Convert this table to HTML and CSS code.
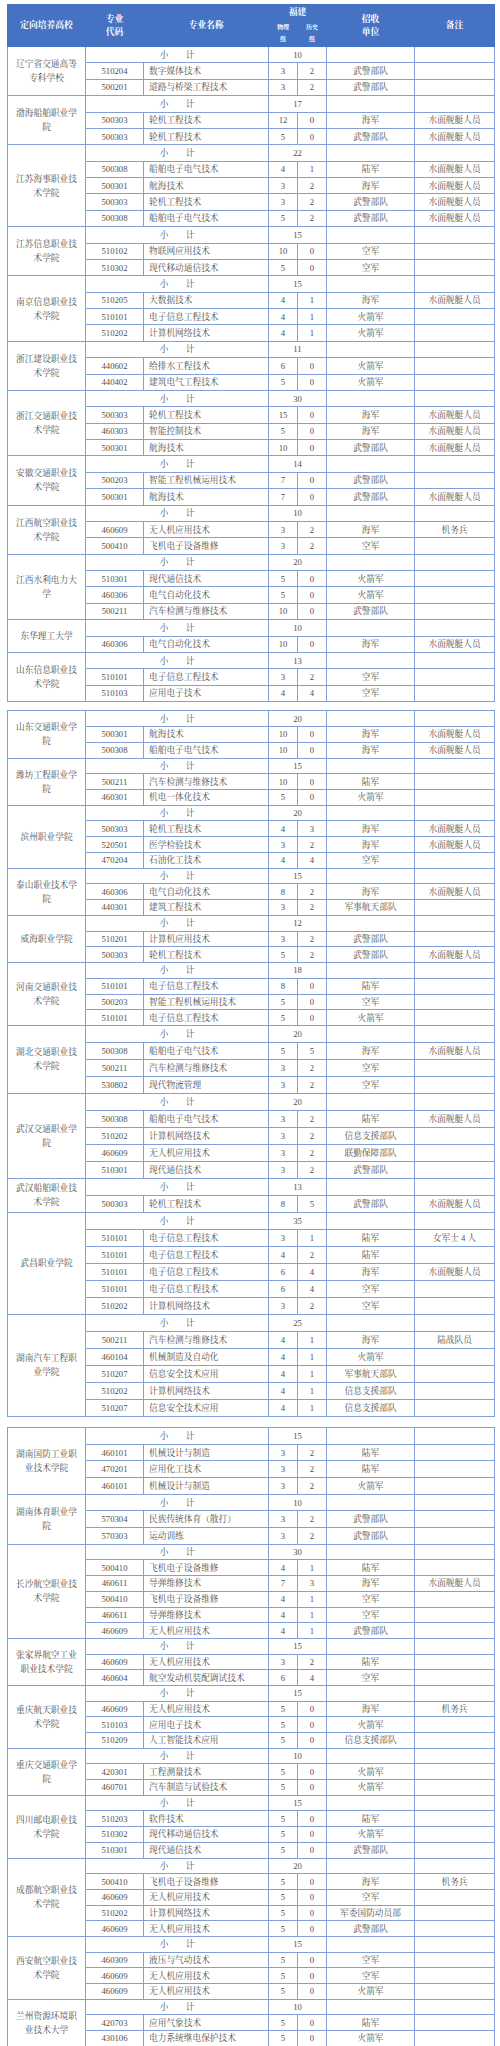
FILE: index.html
```html
<!DOCTYPE html>
<html lang="zh-CN">
<head>
<meta charset="utf-8">
<title>定向培养高校招生计划</title>
<link rel="stylesheet" href="styles.css">
</head>
<body>
<div class="page">

<table class="plan t1">
<colgroup><col class="c-school"><col class="c-code"><col class="c-name"><col class="c-num"><col class="c-num"><col class="c-unit"><col class="c-note"></colgroup>
<thead>
<tr class="h1"><th rowspan="2">定向培养高校</th><th rowspan="2">专业<br>代码</th><th rowspan="2">专业名称</th><th colspan="2">福建</th><th rowspan="2">招收<br>单位</th><th rowspan="2">备注</th></tr>
<tr class="h2"><th class="grp">物理<br>组</th><th class="grp">历史<br>组</th></tr>
</thead>
<tbody>
<tr><td class="sch" rowspan="3">辽宁省交通高等专科学校</td><td colspan="2">小　　计</td><td colspan="2">10</td><td></td><td></td></tr>
<tr><td>510204</td><td class="nm">数字媒体技术</td><td>3</td><td>2</td><td>武警部队</td><td></td></tr>
<tr><td>500201</td><td class="nm">道路与桥梁工程技术</td><td>3</td><td>2</td><td>武警部队</td><td></td></tr>
</tbody>
<tbody>
<tr><td class="sch" rowspan="3">渤海船舶职业学院</td><td colspan="2">小　　计</td><td colspan="2">17</td><td></td><td></td></tr>
<tr><td>500303</td><td class="nm">轮机工程技术</td><td>12</td><td>0</td><td>海军</td><td>水面舰艇人员</td></tr>
<tr><td>500303</td><td class="nm">轮机工程技术</td><td>5</td><td>0</td><td>武警部队</td><td>水面舰艇人员</td></tr>
</tbody>
<tbody>
<tr><td class="sch" rowspan="5">江苏海事职业技术学院</td><td colspan="2">小　　计</td><td colspan="2">22</td><td></td><td></td></tr>
<tr><td>500308</td><td class="nm">船舶电子电气技术</td><td>4</td><td>1</td><td>陆军</td><td>水面舰艇人员</td></tr>
<tr><td>500301</td><td class="nm">航海技术</td><td>3</td><td>2</td><td>海军</td><td>水面舰艇人员</td></tr>
<tr><td>500303</td><td class="nm">轮机工程技术</td><td>3</td><td>2</td><td>武警部队</td><td>水面舰艇人员</td></tr>
<tr><td>500308</td><td class="nm">船舶电子电气技术</td><td>5</td><td>2</td><td>武警部队</td><td>水面舰艇人员</td></tr>
</tbody>
<tbody>
<tr><td class="sch" rowspan="3">江苏信息职业技术学院</td><td colspan="2">小　　计</td><td colspan="2">15</td><td></td><td></td></tr>
<tr><td>510102</td><td class="nm">物联网应用技术</td><td>10</td><td>0</td><td>空军</td><td></td></tr>
<tr><td>510302</td><td class="nm">现代移动通信技术</td><td>5</td><td>0</td><td>空军</td><td></td></tr>
</tbody>
<tbody>
<tr><td class="sch" rowspan="4">南京信息职业技术学院</td><td colspan="2">小　　计</td><td colspan="2">15</td><td></td><td></td></tr>
<tr><td>510205</td><td class="nm">大数据技术</td><td>4</td><td>1</td><td>海军</td><td>水面舰艇人员</td></tr>
<tr><td>510101</td><td class="nm">电子信息工程技术</td><td>4</td><td>1</td><td>火箭军</td><td></td></tr>
<tr><td>510202</td><td class="nm">计算机网络技术</td><td>4</td><td>1</td><td>火箭军</td><td></td></tr>
</tbody>
<tbody>
<tr><td class="sch" rowspan="3">浙江建设职业技术学院</td><td colspan="2">小　　计</td><td colspan="2">11</td><td></td><td></td></tr>
<tr><td>440602</td><td class="nm">给排水工程技术</td><td>6</td><td>0</td><td>火箭军</td><td></td></tr>
<tr><td>440402</td><td class="nm">建筑电气工程技术</td><td>5</td><td>0</td><td>火箭军</td><td></td></tr>
</tbody>
<tbody>
<tr><td class="sch" rowspan="4">浙江交通职业技术学院</td><td colspan="2">小　　计</td><td colspan="2">30</td><td></td><td></td></tr>
<tr><td>500303</td><td class="nm">轮机工程技术</td><td>15</td><td>0</td><td>海军</td><td>水面舰艇人员</td></tr>
<tr><td>460303</td><td class="nm">智能控制技术</td><td>5</td><td>0</td><td>海军</td><td>水面舰艇人员</td></tr>
<tr><td>500301</td><td class="nm">航海技术</td><td>10</td><td>0</td><td>武警部队</td><td>水面舰艇人员</td></tr>
</tbody>
<tbody>
<tr><td class="sch" rowspan="3">安徽交通职业技术学院</td><td colspan="2">小　　计</td><td colspan="2">14</td><td></td><td></td></tr>
<tr><td>500203</td><td class="nm">智能工程机械运用技术</td><td>7</td><td>0</td><td>武警部队</td><td></td></tr>
<tr><td>500301</td><td class="nm">航海技术</td><td>7</td><td>0</td><td>武警部队</td><td>水面舰艇人员</td></tr>
</tbody>
<tbody>
<tr><td class="sch" rowspan="3">江西航空职业技术学院</td><td colspan="2">小　　计</td><td colspan="2">10</td><td></td><td></td></tr>
<tr><td>460609</td><td class="nm">无人机应用技术</td><td>3</td><td>2</td><td>海军</td><td>机务兵</td></tr>
<tr><td>500410</td><td class="nm">飞机电子设备维修</td><td>3</td><td>2</td><td>空军</td><td></td></tr>
</tbody>
<tbody>
<tr><td class="sch" rowspan="4">江西水利电力大学</td><td colspan="2">小　　计</td><td colspan="2">20</td><td></td><td></td></tr>
<tr><td>510301</td><td class="nm">现代通信技术</td><td>5</td><td>0</td><td>火箭军</td><td></td></tr>
<tr><td>460306</td><td class="nm">电气自动化技术</td><td>5</td><td>0</td><td>火箭军</td><td></td></tr>
<tr><td>500211</td><td class="nm">汽车检测与维修技术</td><td>10</td><td>0</td><td>武警部队</td><td></td></tr>
</tbody>
<tbody>
<tr><td class="sch" rowspan="2">东华理工大学</td><td colspan="2">小　　计</td><td colspan="2">10</td><td></td><td></td></tr>
<tr><td>460306</td><td class="nm">电气自动化技术</td><td>10</td><td>0</td><td>海军</td><td>水面舰艇人员</td></tr>
</tbody>
<tbody>
<tr><td class="sch" rowspan="3">山东信息职业技术学院</td><td colspan="2">小　　计</td><td colspan="2">13</td><td></td><td></td></tr>
<tr><td>510101</td><td class="nm">电子信息工程技术</td><td>3</td><td>2</td><td>空军</td><td></td></tr>
<tr><td>510103</td><td class="nm">应用电子技术</td><td>4</td><td>4</td><td>空军</td><td></td></tr>
</tbody>
</table>

<table class="plan t2">
<colgroup><col class="c-school"><col class="c-code"><col class="c-name"><col class="c-num"><col class="c-num"><col class="c-unit"><col class="c-note"></colgroup>
<tbody>
<tr><td class="sch" rowspan="3">山东交通职业学院</td><td colspan="2">小　　计</td><td colspan="2">20</td><td></td><td></td></tr>
<tr><td>500301</td><td class="nm">航海技术</td><td>10</td><td>0</td><td>海军</td><td>水面舰艇人员</td></tr>
<tr><td>500308</td><td class="nm">船舶电子电气技术</td><td>10</td><td>0</td><td>海军</td><td>水面舰艇人员</td></tr>
</tbody>
<tbody>
<tr><td class="sch" rowspan="3">潍坊工程职业学院</td><td colspan="2">小　　计</td><td colspan="2">15</td><td></td><td></td></tr>
<tr><td>500211</td><td class="nm">汽车检测与维修技术</td><td>10</td><td>0</td><td>陆军</td><td></td></tr>
<tr><td>460301</td><td class="nm">机电一体化技术</td><td>5</td><td>0</td><td>火箭军</td><td></td></tr>
</tbody>
<tbody>
<tr><td class="sch" rowspan="4">滨州职业学院</td><td colspan="2">小　　计</td><td colspan="2">20</td><td></td><td></td></tr>
<tr><td>500303</td><td class="nm">轮机工程技术</td><td>4</td><td>3</td><td>海军</td><td>水面舰艇人员</td></tr>
<tr><td>520501</td><td class="nm">医学检验技术</td><td>3</td><td>2</td><td>海军</td><td>水面舰艇人员</td></tr>
<tr><td>470204</td><td class="nm">石油化工技术</td><td>4</td><td>4</td><td>空军</td><td></td></tr>
</tbody>
<tbody>
<tr><td class="sch" rowspan="3">泰山职业技术学院</td><td colspan="2">小　　计</td><td colspan="2">15</td><td></td><td></td></tr>
<tr><td>460306</td><td class="nm">电气自动化技术</td><td>8</td><td>2</td><td>海军</td><td>水面舰艇人员</td></tr>
<tr><td>440301</td><td class="nm">建筑工程技术</td><td>3</td><td>2</td><td>军事航天部队</td><td></td></tr>
</tbody>
<tbody>
<tr><td class="sch" rowspan="3">威海职业学院</td><td colspan="2">小　　计</td><td colspan="2">12</td><td></td><td></td></tr>
<tr><td>510201</td><td class="nm">计算机应用技术</td><td>3</td><td>2</td><td>武警部队</td><td></td></tr>
<tr><td>500303</td><td class="nm">轮机工程技术</td><td>5</td><td>2</td><td>武警部队</td><td>水面舰艇人员</td></tr>
</tbody>
<tbody>
<tr><td class="sch" rowspan="4">河南交通职业技术学院</td><td colspan="2">小　　计</td><td colspan="2">18</td><td></td><td></td></tr>
<tr><td>510101</td><td class="nm">电子信息工程技术</td><td>8</td><td>0</td><td>陆军</td><td></td></tr>
<tr><td>500203</td><td class="nm">智能工程机械运用技术</td><td>5</td><td>0</td><td>空军</td><td></td></tr>
<tr><td>510101</td><td class="nm">电子信息工程技术</td><td>5</td><td>0</td><td>火箭军</td><td></td></tr>
</tbody>
<tbody class="tall">
<tr><td class="sch" rowspan="4">湖北交通职业技术学院</td><td colspan="2">小　　计</td><td colspan="2">20</td><td></td><td></td></tr>
<tr><td>500308</td><td class="nm">船舶电子电气技术</td><td>5</td><td>5</td><td>海军</td><td>水面舰艇人员</td></tr>
<tr><td>500211</td><td class="nm">汽车检测与维修技术</td><td>3</td><td>2</td><td>空军</td><td></td></tr>
<tr><td>530802</td><td class="nm">现代物流管理</td><td>3</td><td>2</td><td>空军</td><td></td></tr>
</tbody>
<tbody class="tall">
<tr><td class="sch" rowspan="5">武汉交通职业学院</td><td colspan="2">小　　计</td><td colspan="2">20</td><td></td><td></td></tr>
<tr><td>500308</td><td class="nm">船舶电子电气技术</td><td>3</td><td>2</td><td>陆军</td><td>水面舰艇人员</td></tr>
<tr><td>510202</td><td class="nm">计算机网络技术</td><td>3</td><td>2</td><td>信息支援部队</td><td></td></tr>
<tr><td>460609</td><td class="nm">无人机应用技术</td><td>3</td><td>2</td><td>联勤保障部队</td><td></td></tr>
<tr><td>510301</td><td class="nm">现代通信技术</td><td>3</td><td>2</td><td>武警部队</td><td></td></tr>
</tbody>
<tbody class="tall">
<tr><td class="sch" rowspan="2">武汉船舶职业技术学院</td><td colspan="2">小　　计</td><td colspan="2">13</td><td></td><td></td></tr>
<tr><td>500303</td><td class="nm">轮机工程技术</td><td>8</td><td>5</td><td>武警部队</td><td>水面舰艇人员</td></tr>
</tbody>
<tbody class="tall">
<tr><td class="sch" rowspan="6">武昌职业学院</td><td colspan="2">小　　计</td><td colspan="2">35</td><td></td><td></td></tr>
<tr><td>510101</td><td class="nm">电子信息工程技术</td><td>3</td><td>1</td><td>陆军</td><td>女军士 4 人</td></tr>
<tr><td>510101</td><td class="nm">电子信息工程技术</td><td>4</td><td>2</td><td>陆军</td><td></td></tr>
<tr><td>510101</td><td class="nm">电子信息工程技术</td><td>6</td><td>4</td><td>海军</td><td>水面舰艇人员</td></tr>
<tr><td>510101</td><td class="nm">电子信息工程技术</td><td>6</td><td>4</td><td>空军</td><td></td></tr>
<tr><td>510202</td><td class="nm">计算机网络技术</td><td>3</td><td>2</td><td>空军</td><td></td></tr>
</tbody>
<tbody class="tall">
<tr><td class="sch" rowspan="6">湖南汽车工程职业学院</td><td colspan="2">小　　计</td><td colspan="2">25</td><td></td><td></td></tr>
<tr><td>500211</td><td class="nm">汽车检测与维修技术</td><td>4</td><td>1</td><td>海军</td><td>陆战队员</td></tr>
<tr><td>460104</td><td class="nm">机械制造及自动化</td><td>4</td><td>1</td><td>火箭军</td><td></td></tr>
<tr><td>510207</td><td class="nm">信息安全技术应用</td><td>4</td><td>1</td><td>军事航天部队</td><td></td></tr>
<tr><td>510202</td><td class="nm">计算机网络技术</td><td>4</td><td>1</td><td>信息支援部队</td><td></td></tr>
<tr><td>510207</td><td class="nm">信息安全技术应用</td><td>4</td><td>1</td><td>信息支援部队</td><td></td></tr>
</tbody>
</table>

<table class="plan t3">
<colgroup><col class="c-school"><col class="c-code"><col class="c-name"><col class="c-num"><col class="c-num"><col class="c-unit"><col class="c-note"></colgroup>
<tbody class="tall">
<tr><td class="sch" rowspan="4">湖南国防工业职业技术学院</td><td colspan="2">小　　计</td><td colspan="2">15</td><td></td><td></td></tr>
<tr><td>460101</td><td class="nm">机械设计与制造</td><td>3</td><td>2</td><td>陆军</td><td></td></tr>
<tr><td>470201</td><td class="nm">应用化工技术</td><td>3</td><td>2</td><td>陆军</td><td></td></tr>
<tr><td>460101</td><td class="nm">机械设计与制造</td><td>3</td><td>2</td><td>火箭军</td><td></td></tr>
</tbody>
<tbody class="tall">
<tr><td class="sch" rowspan="3">湖南体育职业学院</td><td colspan="2">小　　计</td><td colspan="2">10</td><td></td><td></td></tr>
<tr><td>570304</td><td class="nm">民族传统体育（散打）</td><td>3</td><td>2</td><td>武警部队</td><td></td></tr>
<tr><td>570303</td><td class="nm">运动训练</td><td>3</td><td>2</td><td>武警部队</td><td></td></tr>
</tbody>
<tbody>
<tr><td class="sch" rowspan="6">长沙航空职业技术学院</td><td colspan="2">小　　计</td><td colspan="2">30</td><td></td><td></td></tr>
<tr><td>500410</td><td class="nm">飞机电子设备维修</td><td>4</td><td>1</td><td>陆军</td><td></td></tr>
<tr><td>460611</td><td class="nm">导弹维修技术</td><td>7</td><td>3</td><td>海军</td><td>水面舰艇人员</td></tr>
<tr><td>500410</td><td class="nm">飞机电子设备维修</td><td>4</td><td>1</td><td>空军</td><td></td></tr>
<tr><td>460611</td><td class="nm">导弹维修技术</td><td>4</td><td>1</td><td>空军</td><td></td></tr>
<tr><td>460609</td><td class="nm">无人机应用技术</td><td>4</td><td>1</td><td>武警部队</td><td></td></tr>
</tbody>
<tbody>
<tr><td class="sch" rowspan="3">张家界航空工业职业技术学院</td><td colspan="2">小　　计</td><td colspan="2">15</td><td></td><td></td></tr>
<tr><td>460609</td><td class="nm">无人机应用技术</td><td>3</td><td>2</td><td>陆军</td><td></td></tr>
<tr><td>460604</td><td class="nm">航空发动机装配调试技术</td><td>6</td><td>4</td><td>空军</td><td></td></tr>
</tbody>
<tbody>
<tr><td class="sch" rowspan="4">重庆航天职业技术学院</td><td colspan="2">小　　计</td><td colspan="2">15</td><td></td><td></td></tr>
<tr><td>460609</td><td class="nm">无人机应用技术</td><td>5</td><td>0</td><td>海军</td><td>机务兵</td></tr>
<tr><td>510103</td><td class="nm">应用电子技术</td><td>5</td><td>0</td><td>火箭军</td><td></td></tr>
<tr><td>510209</td><td class="nm">人工智能技术应用</td><td>5</td><td>0</td><td>信息支援部队</td><td></td></tr>
</tbody>
<tbody>
<tr><td class="sch" rowspan="3">重庆交通职业学院</td><td colspan="2">小　　计</td><td colspan="2">10</td><td></td><td></td></tr>
<tr><td>420301</td><td class="nm">工程测量技术</td><td>5</td><td>0</td><td>火箭军</td><td></td></tr>
<tr><td>460701</td><td class="nm">汽车制造与试验技术</td><td>5</td><td>0</td><td>火箭军</td><td></td></tr>
</tbody>
<tbody>
<tr><td class="sch" rowspan="4">四川邮电职业技术学院</td><td colspan="2">小　　计</td><td colspan="2">15</td><td></td><td></td></tr>
<tr><td>510203</td><td class="nm">软件技术</td><td>5</td><td>0</td><td>陆军</td><td></td></tr>
<tr><td>510302</td><td class="nm">现代移动通信技术</td><td>5</td><td>0</td><td>火箭军</td><td></td></tr>
<tr><td>510301</td><td class="nm">现代通信技术</td><td>5</td><td>0</td><td>武警部队</td><td></td></tr>
</tbody>
<tbody>
<tr><td class="sch" rowspan="5">成都航空职业技术学院</td><td colspan="2">小　　计</td><td colspan="2">20</td><td></td><td></td></tr>
<tr><td>500410</td><td class="nm">飞机电子设备维修</td><td>5</td><td>0</td><td>海军</td><td>机务兵</td></tr>
<tr><td>460609</td><td class="nm">无人机应用技术</td><td>5</td><td>0</td><td>空军</td><td></td></tr>
<tr><td>510202</td><td class="nm">计算机网络技术</td><td>5</td><td>0</td><td>军委国防动员部</td><td></td></tr>
<tr><td>460609</td><td class="nm">无人机应用技术</td><td>5</td><td>0</td><td>武警部队</td><td></td></tr>
</tbody>
<tbody>
<tr><td class="sch" rowspan="4">西安航空职业技术学院</td><td colspan="2">小　　计</td><td colspan="2">15</td><td></td><td></td></tr>
<tr><td>460309</td><td class="nm">液压与气动技术</td><td>5</td><td>0</td><td>空军</td><td></td></tr>
<tr><td>460609</td><td class="nm">无人机应用技术</td><td>5</td><td>0</td><td>空军</td><td></td></tr>
<tr><td>460609</td><td class="nm">无人机应用技术</td><td>5</td><td>0</td><td>火箭军</td><td></td></tr>
</tbody>
<tbody>
<tr><td class="sch" rowspan="3">兰州资源环境职业技术大学</td><td colspan="2">小　　计</td><td colspan="2">10</td><td></td><td></td></tr>
<tr><td>420703</td><td class="nm">应用气象技术</td><td>5</td><td>0</td><td>陆军</td><td></td></tr>
<tr><td>430106</td><td class="nm">电力系统继电保护技术</td><td>5</td><td>0</td><td>火箭军</td><td></td></tr>
</tbody>
</table>

</div>
</body>
</html>
```

FILE: styles.css
```css
html, body {
  margin: 0;
  padding: 0;
  background: #ffffff;
}

.page {
  padding: 4px 6px 0 7px;
  font-family: "Liberation Serif", "Noto Serif CJK SC", "Noto Sans CJK SC", serif;
  color: #505050;
}

.plan {
  width: 487px;
  table-layout: fixed;
  border-collapse: collapse;
  font-size: 8.7px;
}

.t1 { margin-bottom: 8.3px; }
.t2 { margin-bottom: 10.2px; }

.c-school { width: 78px; }
.c-code { width: 58px; }
.c-name { width: 125px; }
.c-num { width: 29px; }
.c-unit { width: 88px; }
.c-note { width: 80px; }

.plan th {
  background: #4672c4;
  color: #ffffff;
  font-weight: 700;
  font-size: 8.8px;
  line-height: 13px;
  border: 1px solid #4672c4;
  padding: 0;
  text-align: center;
  vertical-align: middle;
}

.plan .h1 { height: 15.5px; }
.plan .h2 { height: 26.5px; }

.plan th.grp {
  font-size: 6px;
  line-height: 12.5px;
}

.plan td {
  border: 1px solid #829fda;
  padding: 0;
  text-align: center;
  vertical-align: middle;
  line-height: 10px;
  white-space: nowrap;
  overflow: hidden;
}

.plan td.nm {
  text-align: left;
  padding-left: 5px;
}

.plan td.sch {
  white-space: normal;
  line-height: 14px;
  padding: 0 5px;
}

.t1 tbody tr { height: 16.375px; }
.t2 tbody tr { height: 15.74px; }
.t2 tbody.tall tr { height: 17px; }
.t3 tbody tr { height: 15.69px; }
.t3 tbody.tall tr { height: 16.67px; }
```
